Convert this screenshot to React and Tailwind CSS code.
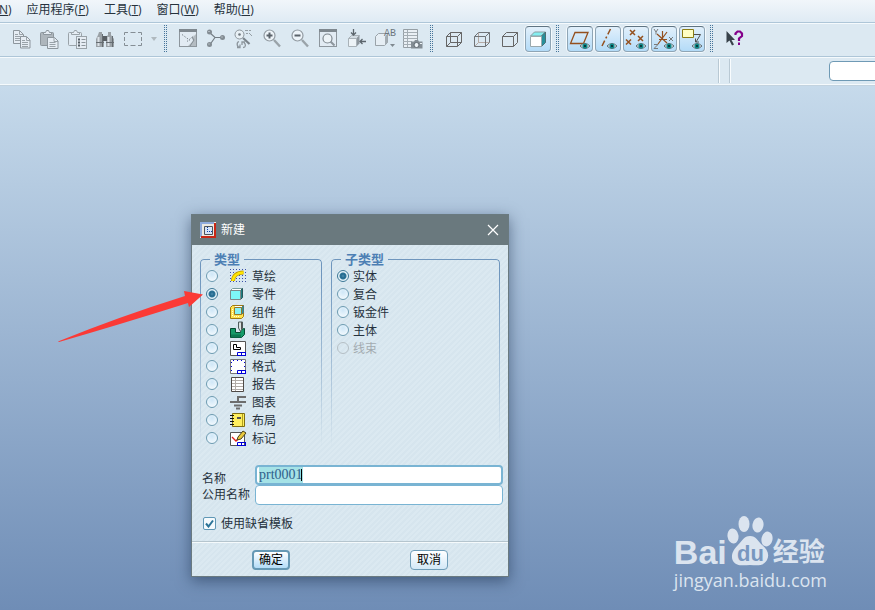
import { useEffect, useRef, useState } from "react";
import { clsx } from "clsx";

const menus = [
  { label: "", hotkey: "N", tail: ")" },
  { label: "应用程序(", hotkey: "P", tail: ")" },
  { label: "工具(", hotkey: "T", tail: ")" },
  { label: "窗口(", hotkey: "W", tail: ")" },
  { label: "帮助(", hotkey: "H", tail: ")" },
];

function Icon({ children, size = 20 }) {
  return (
    <svg
      width={size}
      height={size}
      viewBox={`0 0 ${size} ${size}`}
      fill="none"
      className="block shrink-0 overflow-visible"
      aria-hidden="true"
    >
      {children}
    </svg>
  );
}

function Eye({ x = 15, y = 17 }) {
  return (
    <g transform={`translate(${x} ${y})`}>
      <path d="M-5 0Q0-5 5 0Q0 5-5 0Z" fill="#dfeaf0" stroke="#5d6b70" />
      <circle r="2.6" fill="#0f8a8a" />
      <circle r="1.1" fill="#06282c" />
    </g>
  );
}

function Magnifier({ plus }) {
  return (
    <Icon>
      <path d="M12 11l6 6.5" stroke="#9aa3a9" strokeWidth="2.4" />
      <circle cx="7.5" cy="6.5" r="5.5" fill="#edf4f9" stroke="#929ba2" strokeWidth="1.2" />
      <path d="M4.5 6.5h6" stroke="#5a636a" strokeWidth="2" />
      {plus && <path d="M7.5 3.5v6" stroke="#5a636a" strokeWidth="2" />}
    </Icon>
  );
}

const editTools = [
  {
    name: "复制",
    icon: (
      <Icon>
        <path d="M2.5 1.5h6l4 4v9h-10z" fill="#e6edf4" stroke="#8d969d" />
        <path d="M8.5 1.5v4h4M4 5.5h3M4 7.5h6M4 9.5h5M4 11.5h5" stroke="#9aa3a9" />
        <path d="M9.5 7.5h6l3.5 3.5v8h-9.5z" fill="#e6edf4" stroke="#8d969d" />
        <path d="M15.5 7.5v4h3.5M11 11.5h3M11 13.5h6M11 15.5h6M11 17.5h6" stroke="#9aa3a9" />
      </Icon>
    ),
  },
  {
    name: "粘贴",
    icon: (
      <Icon>
        <rect x="1.5" y="3.5" width="13" height="13" rx="1" fill="#aeb6bc" stroke="#8d969d" />
        <path d="M4.5 5.5v-2h2l1-2h2l1 2h2v2z" fill="#e6edf4" stroke="#8d969d" />
        <path d="M8.5 8.5h7l3.5 3.5v7.5h-10.5z" fill="#e6edf4" stroke="#8d969d" />
        <path d="M15 8.5v4h4M10.5 13.5h6M10.5 15.5h6M10.5 17.5h6" stroke="#9aa3a9" />
      </Icon>
    ),
  },
  {
    name: "选择性粘贴",
    icon: (
      <Icon>
        <rect x="1.5" y="3.5" width="13" height="13" rx="1" fill="#e1ebf3" stroke="#9aa3a9" />
        <path d="M4.5 5.5v-2h2l1-2h2l1 2h2v2z" fill="#e6edf4" stroke="#9aa3a9" />
        <rect x="9.5" y="7.5" width="10" height="12" fill="#e6edf4" stroke="#9aa3a9" />
        <path d="M11 10.5h2M11 13.5h2M11 16.5h2" stroke="#555e65" strokeWidth="2" />
        <path d="M14.5 10.5h4M14.5 13.5h4M14.5 16.5h4" stroke="#8d969d" />
      </Icon>
    ),
  },
  {
    name: "查找",
    icon: (
      <Icon>
        <path d="M4 3h3v3l2 2v10H1V10l2-4z" fill="#9aa1a6" />
        <path d="M13 3h3v3l3 4v8h-8V8l2-2z" fill="#9aa1a6" />
        <path d="M8 7h4v5H8z" fill="#595f64" />
        <path d="M3.5 8v9M13.5 8v9" stroke="#dbe2e7" strokeWidth="2" />
        <path d="M7.5 5v13M17.5 7v11M1 13.5h8M11 13.5h8" stroke="#666d72" />
      </Icon>
    ),
  },
  {
    name: "选取框",
    icon: (
      <Icon>
        <path
          d="M1.5 6V3.5H5M7.5 3.5h5M15 3.5h3.5V6M18.5 8v4M18.5 14v2.5H15M12.5 16.5h-5M5 16.5H1.5V14M1.5 12V8"
          stroke="#858e95"
        />
      </Icon>
    ),
  },
];

const viewTools = [
  {
    name: "重画",
    icon: (
      <Icon>
        <rect x="1.5" y="1.5" width="17" height="16" fill="#e2ebf3" stroke="#8d969d" />
        <path d="M1 0h18v3H1z" fill="#7f888f" />
        <path d="M18 5v12h-8l5-5-1-3z" fill="#b4bcc2" />
        <path d="M12 17l4-6-2-3" stroke="#848d94" />
        <path d="M4 5.5l8 6M9 12.5l7-6" stroke="#7b858c" strokeDasharray="1.5 1.5" />
      </Icon>
    ),
  },
  {
    name: "旋转中心",
    icon: (
      <Icon>
        <path d="M3.5 3.5L9 8.5h7M9 8.5l-5 7" stroke="#747d84" strokeWidth="1.2" />
        <circle cx="3.5" cy="3" r="2.5" fill="#838c93" />
        <circle cx="3.5" cy="15.5" r="2.5" fill="#838c93" />
        <circle cx="16.5" cy="8.5" r="2.5" fill="#838c93" />
        <path d="M2.5 2.5h1M2.5 15h1M15.5 8h1" stroke="#dce5eb" />
      </Icon>
    ),
  },
  {
    name: "定向模式",
    icon: (
      <Icon>
        <path d="M9 9l6.5 6" stroke="#7b848b" strokeWidth="2.2" />
        <circle cx="5.5" cy="5.5" r="4.5" fill="#e8f0f5" stroke="#8d969d" />
        <circle cx="5.5" cy="5.5" r="1.3" fill="#6f787f" />
        <path d="M11 1.5h3M15 1.5h2M12 4.5h2M15 4l3 3" stroke="#969fa5" />
        <path d="M5 12.5c-3 1-2 6 1 6M3 18.5h3v-3M9 18.5c3 0 3-3 1-5M8 16v-3h3" stroke="#8d969d" strokeWidth="1.3" />
      </Icon>
    ),
  },
  { name: "放大", icon: <Magnifier plus /> },
  { name: "缩小", icon: <Magnifier /> },
  {
    name: "重新调整",
    icon: (
      <Icon>
        <rect x="1.5" y="1.5" width="17" height="16" fill="#e2ebf3" stroke="#8d969d" />
        <path d="M1 0h18v3H1z" fill="#7f888f" />
        <path d="M12.5 12.5l4 4" stroke="#8d969d" strokeWidth="2" />
        <circle cx="9.5" cy="9.5" r="4.5" fill="#eef4f8" stroke="#7f888f" strokeWidth="1.2" />
      </Icon>
    ),
  },
  {
    name: "重定向",
    icon: (
      <Icon>
        <path d="M2.5 9.5l3-3h8l-3 3z" fill="#d3dce3" stroke="#a9b2b8" />
        <path d="M10.5 9.5l3-3v8l-3 3z" fill="#8d969d" />
        <path d="M2.5 9.5h8v8h-8z" fill="#edf3f7" stroke="#a9b2b8" />
        <path d="M7.5 0v6M5 3.5l2.5 2.5L10 3.5M20 12.5h-6M16.5 10L14 12.5l2.5 2.5" stroke="#5c656c" strokeWidth="1.3" />
      </Icon>
    ),
  },
  {
    name: "已命名视图",
    icon: (
      <Icon>
        <path d="M1.5 7.5l3-3h9v9l-3 3h-9z" fill="#e6eef4" stroke="#9aa3a9" />
        <path d="M11 7.5l2.5-3v9l-2.5 3z" fill="#a3acb2" />
        <text x="10" y="7" fill="#6d767d" fontFamily="Liberation Mono, monospace" fontSize="10">
          AB
        </text>
        <path d="M16 15h5l-2.5 3z" fill="#808990" />
      </Icon>
    ),
  },
  {
    name: "视图管理器",
    icon: (
      <Icon>
        <path d="M1.5.5h14v18h-14z" fill="#eaf0f5" stroke="#969fa5" />
        <path d="M1 3.5h14M1 6.5h14M1 9.5h14M1 12.5h9M1 15.5h9M5.5 1v17" stroke="#a5aeb4" />
        <path d="M9 12.5h3l1-1.5h3l1 1.5h3.5v7H9z" fill="#848d94" />
        <circle cx="14.5" cy="16" r="2.5" fill="#edf3f7" stroke="#626b72" />
        <path d="M18 14.5h2" stroke="#edf3f7" />
      </Icon>
    ),
  },
];

const displayTools = [
  {
    name: "线框",
    icon: (
      <Icon>
        <path
          d="M2.5 7.5h11v10h-11zM6.5 3.5h11v10h-11zM2.5 7.5l4-4M13.5 7.5l4-4M13.5 17.5l4-4M2.5 17.5l4-4"
          stroke="#666"
        />
      </Icon>
    ),
  },
  {
    name: "隐藏线",
    icon: (
      <Icon>
        <path d="M6.5 4v9.5H17M2.5 17.5l4-4" stroke="#b5a9a3" />
        <path d="M2.5 7.5h11v10h-11zM2.5 7.5l4-4h11v10l-4 4M13.5 7.5l4-4" stroke="#707478" />
      </Icon>
    ),
  },
  {
    name: "无隐藏线",
    icon: (
      <Icon>
        <path d="M2.5 7.5h11v10h-11zM2.5 7.5l4-4h11v10l-4 4M13.5 7.5l4-4" stroke="#666" />
      </Icon>
    ),
  },
  {
    name: "着色",
    active: true,
    icon: (
      <Icon>
        <path d="M2.5 7l4-4h11l-4 4z" fill="#84eef1" stroke="#8c9da0" />
        <path d="M13.5 7l4-4v10.5l-4 4z" fill="#27909b" stroke="#4d6f74" />
        <path d="M2.5 7.5h11v10h-11z" fill="#fff" stroke="#9aa9ae" />
      </Icon>
    ),
  },
];

const datumTools = [
  {
    name: "基准平面",
    icon: (
      <Icon>
        <path d="M5 3.5h13l-4.5 11H.5z" stroke="#94501f" strokeWidth="1.3" />
        <Eye />
      </Icon>
    ),
  },
  {
    name: "基准轴",
    icon: (
      <Icon>
        <path d="M12.5 0L3 19" stroke="#94501f" strokeWidth="1.5" strokeDasharray="6 2.5 2 2.5" />
        <Eye x={14} />
      </Icon>
    ),
  },
  {
    name: "基准点",
    icon: (
      <Icon>
        <path d="M4 1l5 5M9 1L4 6M12 7l5 5M17 7l-5 5M0 10.5l5 5M5 10.5l-5 5" stroke="#94501f" strokeWidth="1.5" />
        <Eye />
      </Icon>
    ),
  },
  {
    name: "坐标系",
    icon: (
      <Icon>
        <path d="M8.5 2v9M3 5l10 9M13 3l-9 12M5 10.5h8" stroke="#94501f" strokeWidth="1.2" />
        <path d="M0 0l2 3L4 0M2 3v2.5M15 8l4 4M19 8l-4 4M0 15.5h4l-4 4h4" stroke="#7a7a7a" />
        <Eye x={15} />
      </Icon>
    ),
  },
  {
    name: "注释显示",
    icon: (
      <Icon>
        <path d="M.5.5h11v8H.5z" fill="#ffffc4" stroke="#8b7c14" />
        <path d="M12 5.5h6.5L14 13M13.5 9.5V13H17" stroke="#4f4f4f" />
        <Eye />
      </Icon>
    ),
  },
];

function SheetCorner() {
  return <path d="M7.5 15.5v-3h8M11.5 12.5v3M7 15.5h9M15.5 12v4" stroke="#0000d8" />;
}

const partTypes = [
  {
    label: "草绘",
    icon: (
      <Icon size={16}>
        <path
          d="M0 1.5h16M0 4.5h16M0 7.5h16M0 10.5h16M0 13.5h16"
          stroke="#3c50a8"
          strokeDasharray="1 2"
        />
        <path d="M3 13c0-5 4-8.5 10.5-8.5" stroke="#c29b00" strokeWidth="4" />
        <path d="M3 13c0-5 4-8.5 10.5-8.5" stroke="#ffe600" strokeWidth="2.5" />
      </Icon>
    ),
  },
  {
    label: "零件",
    icon: (
      <Icon size={16}>
        <path d="M.5 4.5l2-2h10l-2 2z" fill="#fff" stroke="#7b9c9c" />
        <path d="M10.5 4.5l2-2v9l-2 2z" fill="#1b7f82" stroke="#27575a" />
        <path d="M.5 4.5h10v9H.5z" fill="#7df7f7" stroke="#7b8889" />
      </Icon>
    ),
  },
  {
    label: "组件",
    icon: (
      <Icon size={16}>
        <path d="M.5 3.5l2-2h11v11l-2 2H.5z" fill="#ffe34e" stroke="#a07a10" />
        <path d="M2.5 5v8M4 12.5h6" stroke="#fffbe0" strokeDasharray="1 1" />
        <path d="M11.5 3.5l2-2v7l-2 2z" fill="#2b9696" stroke="#547777" />
        <path d="M4.5 3.5h7v7h-7z" fill="#86f2f4" stroke="#9a7727" />
        <path d="M5 2.5h7" stroke="#fff" />
      </Icon>
    ),
  },
  {
    label: "制造",
    icon: (
      <Icon size={16}>
        <path d="M.5 6.5h5v4h5v-3l4-1v6l-3 3H.5z" fill="#159a68" stroke="#064b33" />
        <path d="M1 12.5h10v3H1z" fill="#0b7850" />
        <path d="M8.5 0h4v6l-2 3.5-2-3.5z" fill="#dbe4e4" stroke="#4e5d5d" />
        <path d="M11.5 0v7" stroke="#555" />
      </Icon>
    ),
  },
  {
    label: "绘图",
    icon: (
      <Icon size={16}>
        <path d="M.5 1.5h15v14H.5z" fill="#fff" stroke="#555" />
        <path d="M3.5 4.5h3v3h4v2h-7z" stroke="#000" />
        <SheetCorner />
      </Icon>
    ),
  },
  {
    label: "格式",
    icon: (
      <Icon size={16}>
        <path d="M.5 1.5h15v14H.5z" fill="#fff" stroke="#777" />
        <path d="M3 2.5h11M1.5 4v11M14.5 4v8" stroke="#0000d8" strokeDasharray="1 3" />
        <SheetCorner />
      </Icon>
    ),
  },
  {
    label: "报告",
    icon: (
      <Icon size={16}>
        <path d="M1.5 1.5h12v14h-12z" fill="#fff" stroke="#4f4a47" />
        <path d="M2 4.5h11M2 7.5h11M2 10.5h11M2 13.5h11M5.5 2v13" stroke="#b1aca7" />
      </Icon>
    ),
  },
  {
    label: "图表",
    icon: (
      <Icon size={16}>
        <path d="M0 8h16M8 8V3h8" stroke="#6d6d6d" strokeWidth="2" />
        <path d="M4 11.5h8M6 14.5h4" stroke="#6d6d6d" strokeWidth="2" />
      </Icon>
    ),
  },
  {
    label: "布局",
    icon: (
      <Icon size={16}>
        <path d="M2.5 1.5h12v13h-12z" fill="#ffef5e" stroke="#806f10" />
        <path d="M12.5 2v12" stroke="#b2a020" />
        <path d="M7 5h4v2H7z" fill="#555" />
        <path d="M0 3.5h4M0 6.5h4M0 9.5h4M0 12.5h4" stroke="#111" />
      </Icon>
    ),
  },
  {
    label: "标记",
    icon: (
      <Icon size={16}>
        <path d="M.5 2.5h14v13H.5z" fill="#fff" stroke="#555" />
        <path d="M2 7l4 4 3-3" stroke="#e0201b" strokeWidth="1.3" />
        <path d="M7 10l1-3 5-6 3 2-5 6z" fill="#e8c83c" stroke="#4a4218" />
        <SheetCorner />
      </Icon>
    ),
  },
];

const subTypes = [
  { label: "实体" },
  { label: "复合" },
  { label: "钣金件" },
  { label: "主体" },
  { label: "线束", disabled: true },
];

function ToolButton({ tool, framed }) {
  return (
    <button type="button" title={tool.name} aria-label={tool.name} className="grid h-7 w-7 place-items-center">
      <span
        className={clsx(
          "grid h-[26px] w-[26px] place-items-center rounded-sm border",
          framed || tool.active
            ? "border-[#8fa5b5] border-t-[#5f7482] bg-gradient-to-b from-[#e2f0fb] to-[#b3dbf8] shadow-[0_0_0_1px_#f4fafd]"
            : "border-transparent"
        )}
      >
        {tool.icon}
      </span>
    </button>
  );
}

function Grip() {
  return (
    <div className="flex w-3.5 gap-px pl-1">
      <span className="h-7 w-px bg-[repeating-linear-gradient(#45749a_0px,#45749a_1px,transparent_1px,transparent_2px)]" />
      <span className="h-7 w-px bg-[repeating-linear-gradient(#45749a_0px,#45749a_1px,transparent_1px,transparent_2px)]" />
    </div>
  );
}

function GroupBox({ title, children }) {
  return (
    <fieldset className="relative min-w-0 before:pointer-events-none before:absolute before:inset-x-0 before:-top-2 before:bottom-0 before:rounded-t before:border before:border-b-0 before:border-[#6f96bd] before:mask-b-from-10% before:mask-b-to-100%">
      <legend className="relative z-10 ml-2.5 h-[15px] bg-[#d9e7f0] px-1 text-[13px] leading-[15px] font-bold text-[#4d7fb4]">
        {title}
      </legend>
      {children}
    </fieldset>
  );
}

function RadioRow({ name, item, checked, onSelect }) {
  return (
    <label
      className={clsx(
        "relative flex h-[18px] items-center pl-1.5",
        item.disabled ? "text-[#a3abb0]" : "text-[#26323d]"
      )}
    >
      <input
        type="radio"
        name={name}
        checked={checked}
        disabled={item.disabled}
        onChange={() => onSelect(item.label)}
        className="h-3 w-3 shrink-0 appearance-none rounded-full border border-[#6d9bb1] bg-[radial-gradient(circle_at_50%_30%,#cfe7f7,#fafdff)] checked:border-[#3d7896] checked:bg-[radial-gradient(circle_at_50%_50%,#4d8fb0_0px,#23698f_2px,#2f7698_3px,#e5f3fa_4px)] disabled:border-[#b5bfc5] disabled:bg-none"
      />
      {item.icon && <span className="ml-3">{item.icon}</span>}
      <span className={clsx("pt-0.5 leading-4", item.icon ? "ml-1.5" : "ml-1")}>{item.label}</span>
    </label>
  );
}

function NewFileDialog() {
  const [type, setType] = useState("零件");
  const [subType, setSubType] = useState("实体");
  const nameRef = useRef(null);

  useEffect(() => {
    nameRef.current.focus();
    nameRef.current.select();
  }, []);

  return (
    <section
      role="dialog"
      aria-labelledby="dialog-title"
      className="absolute top-32 left-[191px] w-[318px] border border-[#6a7a80] bg-[#d9e7f0] shadow-[0_4px_14px_rgba(25,45,75,0.55)]"
    >
      <header className="flex h-[30px] items-center bg-[#6a797e] px-2 text-white">
        <Icon size={16}>
          <path d="M0 0h16v16H0z" fill="#ece9e2" />
          <path d="M1 15V1h13" stroke="#8fabdc" strokeWidth="2" />
          <path d="M15 1v14H1" stroke="#c92716" strokeWidth="2" />
          <path d="M4.5 4.5h8v8h-8z" fill="#d6e4f8" stroke="#4d535c" />
          <path d="M7.5 5v5M7 9.5h5" stroke="#0a3da8" strokeDasharray="1 1" />
        </Icon>
        <h1 id="dialog-title" className="ml-[5px] text-xs">
          新建
        </h1>
        <button type="button" aria-label="关闭" className="ml-auto grid h-5 w-3.5 place-items-center">
          <Icon size={10}>
            <path d="M0 0l10 10M10 0L0 10" stroke="#fff" strokeWidth="1.2" />
          </Icon>
        </button>
      </header>

      <form
        onSubmit={(event) => event.preventDefault()}
        className="bg-[repeating-linear-gradient(135deg,#d6e5ee_0px,#d6e5ee_2px,#dbe9f1_2px,#dbe9f1_4px)]"
      >
        <div className="grid grid-cols-[122px_1fr] gap-[9px] px-2 pt-[7px]">
          <GroupBox title="类型">
            {partTypes.map((item) => (
              <RadioRow key={item.label} name="type" item={item} checked={type === item.label} onSelect={setType} />
            ))}
          </GroupBox>
          <GroupBox title="子类型">
            {subTypes.map((item) => (
              <RadioRow
                key={item.label}
                name="subtype"
                item={item}
                checked={subType === item.label}
                onSelect={setSubType}
              />
            ))}
          </GroupBox>
        </div>

        <div className="grid grid-cols-[53px_1fr] pt-[18px] pr-[5px] pl-2.5 leading-3">
          <label htmlFor="part-name" className="self-end">
            名称
          </label>
          <div className="relative flex">
            <input
              id="part-name"
              ref={nameRef}
              type="text"
              defaultValue="prt0001"
              className="h-5 w-full min-w-0 rounded-sm border-2 border-[#79b4d3] bg-white px-0.5 font-['Liberation_Serif',serif] text-sm leading-4 text-[#2f5f8c] outline-none selection:bg-[#a5e2e6] selection:text-[#2f5f8c]"
            />
            <span className="absolute top-1 left-[46px] h-3 w-px bg-black" />
          </div>
          <label htmlFor="common-name" className="self-center whitespace-nowrap">
            公用名称
          </label>
          <input
            id="common-name"
            type="text"
            className="h-5 min-w-0 rounded-sm border border-[#79b4d3] bg-white px-1 outline-none"
          />
        </div>

        <label className="flex h-9 items-center gap-[5px] pl-[11px]">
          <span className="relative grid place-items-center">
            <input
              type="checkbox"
              defaultChecked
              className="peer h-[13px] w-[13px] appearance-none rounded-xs border border-[#5f97b5] bg-[#f4fafd]"
            />
            <svg
              viewBox="0 0 9 9"
              fill="none"
              className="pointer-events-none absolute hidden h-[9px] w-[9px] peer-checked:block"
            >
              <path d="M1 4.5l2.5 3L8 1.5" stroke="#2b7397" strokeWidth="2" />
            </svg>
          </span>
          <span className="pt-0.5">使用缺省模板</span>
        </label>

        <footer className="grid grid-cols-2 justify-items-center border-t border-[#b5c5ce] pt-2 pb-1.5 shadow-[inset_0_1px_0_#f5fafc]">
          <button
            type="submit"
            className="h-5 w-[38px] rounded-sm border-2 border-[#6699b5] bg-gradient-to-b from-white to-[#b3dcf7] leading-4 text-black"
          >
            确定
          </button>
          <button
            type="button"
            className="h-5 w-[38px] rounded-sm border border-[#6f9db8] bg-gradient-to-b from-white to-[#d3e8f6] leading-4 text-black"
          >
            取消
          </button>
        </footer>
      </form>
    </section>
  );
}

function Watermark() {
  return (
    <div className="absolute right-12 bottom-5 text-[#dbe4ef]">
      <div className="flex items-end">
        <span className="text-[34px] leading-9 font-bold">Bai</span>
        <svg width="46" height="50" viewBox="0 0 46 50" className="mb-1 shrink-0" aria-hidden="true">
          <g fill="currentColor">
            <ellipse cx="6" cy="20" rx="5.5" ry="7.5" transform="rotate(-8 6 20)" />
            <ellipse cx="17" cy="8" rx="5.5" ry="8" />
            <ellipse cx="31" cy="9" rx="5.5" ry="7.5" transform="rotate(10 31 9)" />
            <ellipse cx="40" cy="23" rx="5.5" ry="7.5" transform="rotate(12 40 23)" />
            <path d="M23 20c6 0 8 5 12 9 5 4 8 9 5 15-4 7-11 5-17 5s-13 2-17-4c-3-6 1-12 5-16s6-9 12-9z" />
          </g>
          <text x="10" y="45" fill="#7897bf" fontFamily="Liberation Sans, sans-serif" fontWeight="700" fontSize="22">
            du
          </text>
        </svg>
        <span className="text-[26px] leading-9 font-bold">经验</span>
      </div>
      <p className="font-['Open_Sans',sans-serif] text-lg leading-5">jingyan.baidu.com</p>
    </div>
  );
}

export default function App() {
  return (
    <div className="flex min-h-screen flex-col overflow-hidden bg-[#dce9f2] font-['Liberation_Sans','Noto_Sans_CJK_SC',sans-serif] text-xs text-[#26323d]">
      <nav className="-ml-px flex h-[22px] items-center gap-[15px] bg-gradient-to-b from-[#f1f6fa] to-[#dfebf4] pb-0.5 font-['Open_Sans','Noto_Sans_CJK_SC',sans-serif]">
        {menus.map((menu) => (
          <button key={menu.hotkey} type="button" className="whitespace-nowrap">
            {menu.label}
            <u>{menu.hotkey}</u>
            {menu.tail}
          </button>
        ))}
      </nav>

      <div className="flex h-[35px] items-center border-y border-[#aec6d8] pb-px pl-[7px] shadow-[inset_0_1px_0_#f5fafd]">
        {editTools.map((tool) => (
          <ToolButton key={tool.name} tool={tool} />
        ))}
        <button type="button" aria-label="选取选项" className="grid h-7 w-[13px] place-items-center">
          <svg width="6" height="4" viewBox="0 0 6 4" aria-hidden="true">
            <path d="M0 0h6L3 4z" fill="#b0b9bf" />
          </svg>
        </button>
        <Grip />
        {viewTools.map((tool) => (
          <ToolButton key={tool.name} tool={tool} />
        ))}
        <Grip />
        {displayTools.map((tool) => (
          <ToolButton key={tool.name} tool={tool} />
        ))}
        <Grip />
        {datumTools.map((tool) => (
          <ToolButton key={tool.name} tool={tool} framed />
        ))}
        <Grip />
        <button type="button" aria-label="上下文帮助" className="grid h-7 w-7 place-items-center">
          <Icon>
            <path d="M2.5 2v12l3-2.5L8 16.5l2-1-2.5-4.5H11z" fill="#38424a" />
            <path d="M11.5 6V4.5l2-2H16l2 2V7l-3 2.5V12" stroke="#84008a" strokeWidth="2.2" />
            <path d="M14 13.5h2V16h-2z" fill="#84008a" />
          </Icon>
        </button>
      </div>

      <div className="flex h-[29px] items-center justify-end border-b border-[#c3d3df] shadow-[inset_0_1px_0_#f5fafd,inset_0_-1px_0_#f5fafd]">
        <span className="h-6 w-px bg-[#b9c9d4] shadow-[1px_0_0_#f8fcfe]" />
        <span className="ml-2.5 h-6 w-px bg-[#b9c9d4] shadow-[1px_0_0_#f8fcfe]" />
        <input
          type="text"
          aria-label="过滤器"
          className="-mr-1 ml-[99px] h-5 w-[50px] rounded-sm border border-[#6f9ab5] bg-white px-1 outline-none"
        />
      </div>

      <main className="relative flex-1 bg-gradient-to-b from-[#c6daeb] to-[#6f8db6]">
        <NewFileDialog />
        <svg
          width="146"
          height="54"
          viewBox="0 0 146 54"
          className="pointer-events-none absolute top-[203px] left-[58px]"
          aria-hidden="true"
        >
          <path d="M0 52.5Q60 28 127 7l-1-5 19 3.5-14 12.5-1-4Q60 36 1 53z" fill="#fb3a36" />
        </svg>
        <Watermark />
      </main>
    </div>
  );
}
